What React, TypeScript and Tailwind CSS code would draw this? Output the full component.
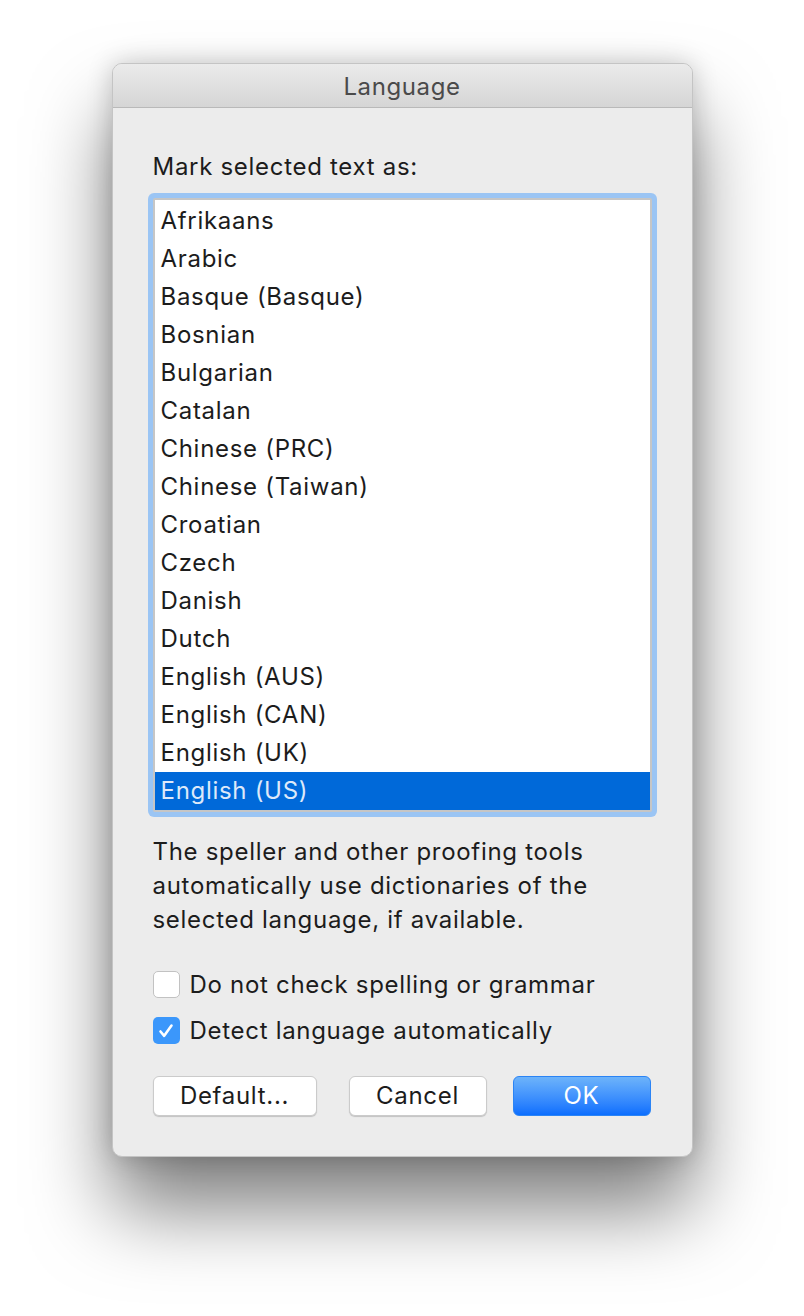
import React from 'react';

const languages = [
  'Afrikaans',
  'Arabic',
  'Basque (Basque)',
  'Bosnian',
  'Bulgarian',
  'Catalan',
  'Chinese (PRC)',
  'Chinese (Taiwan)',
  'Croatian',
  'Czech',
  'Danish',
  'Dutch',
  'English (AUS)',
  'English (CAN)',
  'English (UK)',
  'English (US)',
];

const selected = 'English (US)';

const Checkbox = ({ checked, label }: { checked: boolean; label: string }) => (
  <div className="flex items-center h-[27px] gap-[10px]">
    {checked ? (
      <div className="w-[27px] h-[27px] rounded-[5px] bg-[#3b97fb] flex items-center justify-center">
        <svg width="18" height="18" viewBox="0 0 18 18" fill="none">
          <path d="M3.5 9.5 L7.2 13.8 L14.5 3.6" stroke="white" strokeWidth="2.6" strokeLinecap="round" strokeLinejoin="round" />
        </svg>
      </div>
    ) : (
      <div className="w-[27px] h-[27px] rounded-[5px] bg-white border border-[#c2c2c2]" />
    )}
    <span>{label}</span>
  </div>
);

export default function App() {
  return (
    <div className="min-h-[1316px] bg-white pt-[63px] flex justify-center font-['Inter','Liberation_Sans',sans-serif] text-[24px] tracking-[0.7px] text-[#1c1c1c]">
      <div className="w-[581px] h-[1094px] rounded-[10px] border border-[#c4c4c4] bg-[#ececec] overflow-hidden shadow-[0_52px_80px_rgba(0,0,0,0.5),0_0_26px_rgba(0,0,0,0.2)] flex flex-col">
        {/* title bar */}
        <div className="h-[44px] shrink-0 pt-[3px] bg-gradient-to-b from-[#ebebeb] to-[#d5d5d5] border-b border-[#b9b9b9] flex items-center justify-center text-[#4a4a4a] tracking-[0.6px]">
          Language
        </div>

        <div className="flex-1 px-[40px] pt-[44px]">
          <div className="leading-[30px] mb-[16px]">Mark selected text as:</div>

          <div className="rounded-[2px] shadow-[0_0_0_5px_#9bc5f4] border-2 border-[#c6c6c6] bg-white pt-[2px]">
            {languages.map((lang) => (
              <div
                key={lang}
                className={
                  lang === selected
                    ? 'h-[38px] pl-[6px] flex items-center bg-[#0069d9] text-[#dde9fa]'
                    : 'h-[38px] pl-[6px] flex items-center'
                }
              >
                {lang}
              </div>
            ))}
          </div>

          <p className="mt-[23px] leading-[34px]">
            The speller and other proofing tools
            <br />
            automatically use dictionaries of the
            <br />
            selected language, if available.
          </p>

          <div className="mt-[34px] flex flex-col gap-[19px]">
            <Checkbox checked={false} label="Do not check spelling or grammar" />
            <Checkbox checked={true} label="Detect language automatically" />
          </div>

          <div className="mt-[32px] flex items-center">
            <button className="w-[164px] h-[40px] rounded-[6px] bg-white border border-[#cbcbcb] shadow-[0_1px_1px_rgba(0,0,0,0.18)]">
              Default...
            </button>
            <button className="ml-[32px] w-[138px] h-[40px] rounded-[6px] bg-white border border-[#cbcbcb] shadow-[0_1px_1px_rgba(0,0,0,0.18)]">
              Cancel
            </button>
            <button className="ml-[26px] w-[138px] h-[40px] rounded-[6px] bg-gradient-to-b from-[#6db3fa] to-[#0a6efe] text-white border border-[#2b84f5]">
              OK
            </button>
          </div>
        </div>
      </div>
    </div>
  );
}
